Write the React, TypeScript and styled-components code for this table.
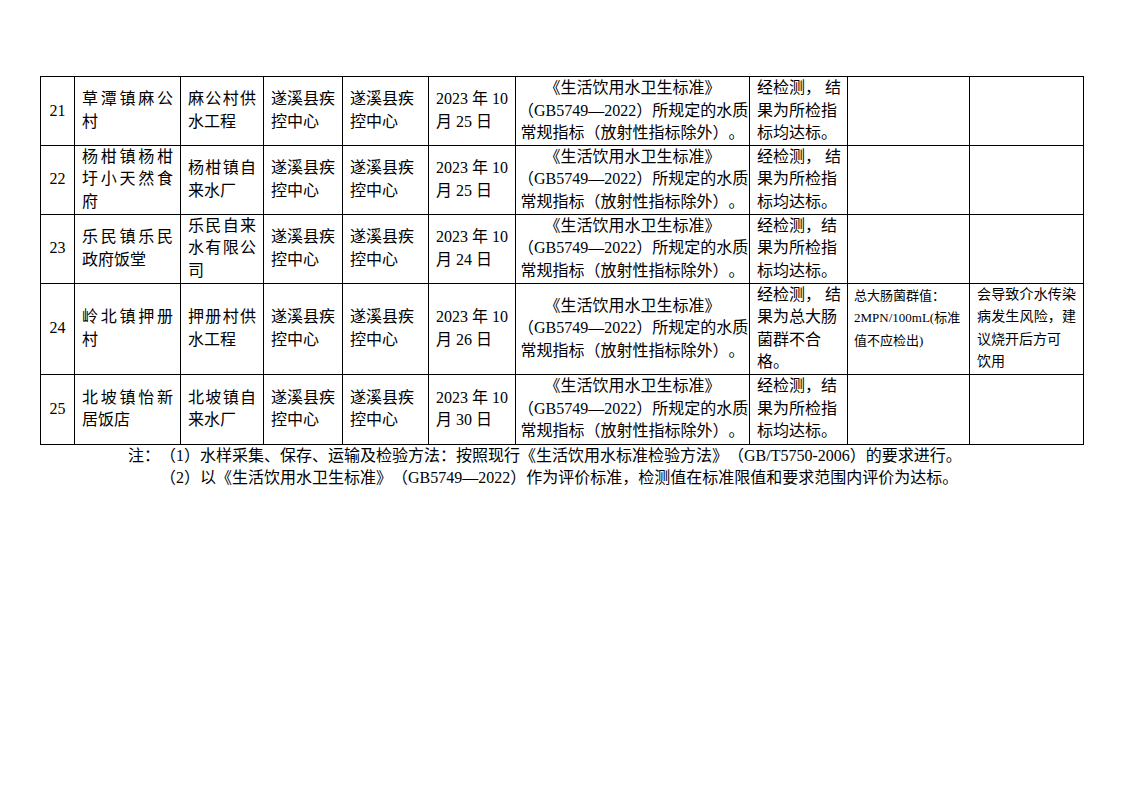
import React from "react";
import styled, { createGlobalStyle } from "styled-components";

const Global = createGlobalStyle`
  html, body { margin: 0; padding: 0; background: #fff; }
  body {
    font-family: "Liberation Serif", "Noto Sans CJK SC", serif;
    color: #000;
    text-spacing-trim: space-all;
    font-kerning: none;
  }
`;

const Page = styled.div`
  width: 1122px;
  height: 793px;
  padding: 76px 0 0 40px;
  box-sizing: border-box;
`;

const Table = styled.table`
  border-collapse: collapse;
  table-layout: fixed;
  width: 1044px;
  font-size: 16px;
  line-height: 22.5px;
`;

const Col = styled.col<{ $w: number }>`
  width: ${(p) => p.$w}px;
`;

const Row = styled.tr<{ $h: number }>`
  height: ${(p) => p.$h}px;
`;

const Cell = styled.td<{ $align?: string; $valign?: string; $size?: number; $pad?: number }>`
  border: 1px solid #000;
  padding: ${(p) => (p.$valign === "top" ? "1px" : "0")} ${(p) => p.$pad ?? 7}px 0;
  text-align: ${(p) => p.$align ?? "left"};
  vertical-align: ${(p) => p.$valign ?? "middle"};
  font-size: ${(p) => p.$size ?? 16}px;
  overflow: visible;
`;

const Line = styled.div<{ $spread?: boolean }>`
  white-space: nowrap;
  text-align-last: ${(p) => (p.$spread ? "justify" : "auto")};
`;

const Notes = styled.div`
  padding-left: 88px;
  font-size: 16px;
  line-height: 22px;
`;

const NoteLine = styled.div<{ $indent?: number }>`
  white-space: nowrap;
  padding-left: ${(p) => p.$indent ?? 0}px;
`;

type L = [string, boolean?];

type RowData = {
  no: string;
  h: number;
  place: L[];
  unit: L[];
  date: string;
  result: string[];
  value?: string[];
  advice?: L[];
};

const rows: RowData[] = [
  {
    no: "21",
    h: 68,
    place: [["草潭镇麻公", true], ["村"]],
    unit: [["麻公村供", true], ["水工程"]],
    date: "25",
    result: ["经检测， 结", "果为所检指", "标均达标。"],
  },
  {
    no: "22",
    h: 69,
    place: [["杨柑镇杨柑", true], ["圩小天然食", true], ["府"]],
    unit: [["杨柑镇自", true], ["来水厂"]],
    date: "25",
    result: ["经检测， 结", "果为所检指", "标均达标。"],
  },
  {
    no: "23",
    h: 69,
    place: [["乐民镇乐民", true], ["政府饭堂"]],
    unit: [["乐民自来", true], ["水有限公", true], ["司"]],
    date: "24",
    result: ["经检测，结", "果为所检指", "标均达标。"],
  },
  {
    no: "24",
    h: 91,
    place: [["岭北镇押册", true], ["村"]],
    unit: [["押册村供", true], ["水工程"]],
    date: "26",
    result: ["经检测， 结", "果为总大肠", "菌群不合", "格。"],
    value: ["总大肠菌群值：", "2MPN/100mL(标准", "值不应检出)"],
    advice: [["会导致介水传染", true], ["病发生风险，建", true], ["议烧开后方可"], ["饮用"]],
  },
  {
    no: "25",
    h: 70,
    place: [["北坡镇怡新", true], ["居饭店"]],
    unit: [["北坡镇自", true], ["来水厂"]],
    date: "30",
    result: ["经检测，结", "果为所检指", "标均达标。"],
  },
];

const widths = [34, 106, 83, 79, 86, 87, 234, 98, 122, 114];

const Lines: React.FC<{ lines: L[] }> = ({ lines }) => (
  <>
    {lines.map(([t, s], i) => (
      <Line key={i} $spread={!!s}>
        {t}
      </Line>
    ))}
  </>
);

export default function App() {
  return (
    <div lang="zh-CN">
      <Global />
      <Page>
        <Table>
          <colgroup>
            {widths.map((w, i) => (
              <Col key={i} $w={w} />
            ))}
          </colgroup>
          <tbody>
            {rows.map((r) => (
              <Row key={r.no} $h={r.h}>
                <Cell $align="center" $pad={0}>
                  {r.no}
                </Cell>
                <Cell>
                  <Lines lines={r.place} />
                </Cell>
                <Cell>
                  <Lines lines={r.unit} />
                </Cell>
                <Cell>
                  <Line>遂溪县疾</Line>
                  <Line>控中心</Line>
                </Cell>
                <Cell>
                  <Line>遂溪县疾</Line>
                  <Line>控中心</Line>
                </Cell>
                <Cell>
                  <Line>2023 年 10</Line>
                  <Line>月 {r.date} 日</Line>
                </Cell>
                <Cell $align="center" $pad={2}>
                  <Line>《生活饮用水卫生标准》</Line>
                  <Line>（GB5749—2022）所规定的水质</Line>
                  <Line>常规指标（放射性指标除外）。</Line>
                </Cell>
                <Cell>
                  {r.result.map((t, i) => (
                    <Line key={i}>{t}</Line>
                  ))}
                </Cell>
                <Cell $valign="top" $size={13} $pad={6}>
                  {r.value?.map((t, i) => (
                    <Line key={i}>{t}</Line>
                  ))}
                </Cell>
                <Cell $size={14}>{r.advice && <Lines lines={r.advice} />}</Cell>
              </Row>
            ))}
          </tbody>
        </Table>
        <Notes>
          <NoteLine>注：（1）水样采集、保存、运输及检验方法：按照现行《生活饮用水标准检验方法》（GB/T5750-2006）的要求进行。</NoteLine>
          <NoteLine $indent={32}>（2）以《生活饮用水卫生标准》（GB5749—2022）作为评价标准，检测值在标准限值和要求范围内评价为达标。</NoteLine>
        </Notes>
      </Page>
    </div>
  );
}
